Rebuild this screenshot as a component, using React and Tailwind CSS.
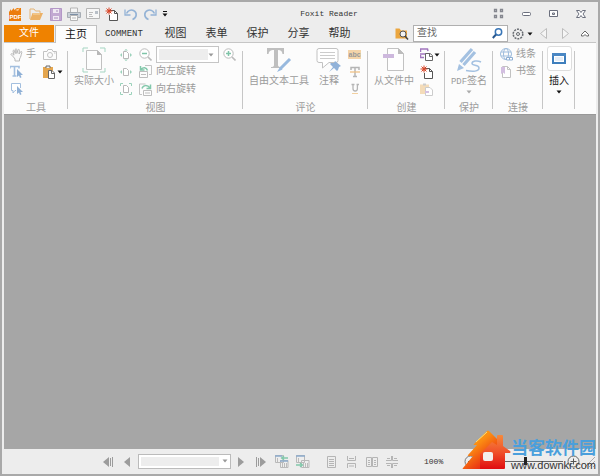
import React from "react";

function Svg({ w = 14, h = 14, className = "", children }) {
  return (
    <svg width={w} height={h} viewBox={`0 0 ${w} ${h}`} fill="none" aria-hidden="true" className={`block shrink-0 ${className}`}>
      {children}
    </svg>
  );
}

function Btn({ label, className = "", children }) {
  return (
    <button type="button" aria-label={label} className={`flex shrink-0 items-center ${className}`}>
      {children}
    </button>
  );
}

const Caret = ({ color = "#111" }) => (
  <Svg w={6} h={4}><path d="M0.5 0.5h5L3 3.5z" fill={color} /></Svg>
);

/* title bar */
const PdfLogo = () => (
  <Svg w={14}>
    <path d="M1 5l2-3v2l3-3v2l3-2h4v13H1z" fill="#ec7d0c" />
    <path d="M7 3l5-2-2 3z" fill="#f9c98f" />
    <text x="1.500" y="11.500" fontSize="6" fontWeight="bold" fill="#fff" fontFamily="Liberation Sans, sans-serif">PDF</text>
  </Svg>
);
const FolderIcon = () => (
  <Svg>
    <path d="M1 12V2h4l1.500 2H11v2" stroke="#e5b577" />
    <path d="M3.500 6H14l-3 7H1z" fill="#ecb165" />
    <path d="M4 7h7" stroke="#f6d7a8" />
  </Svg>
);
const SaveIcon = () => (
  <Svg w={12} h={13}>
    <path d="M.5.5h11v12H.5z" fill="#c2a9d2" stroke="#b397c7" />
    <path d="M3 1h6v4H3zM3 8h6v4H3z" fill="#efe9f3" />
    <path d="M4 10h4M7 2v2" stroke="#a98dbd" />
  </Svg>
);
const PrintIcon = () => (
  <Svg>
    <path d="M3.500 5V1h7v4" stroke="#b5b5b5" fill="#f5f5f5" />
    <path d="M.5 5.500h13v5H.5z" fill="#c9d0d8" stroke="#a7adb4" />
    <path d="M3 7.500h8" stroke="#7c8fa5" />
    <path d="M3.500 8.500h7v5h-7z" fill="#fafafa" stroke="#b5b5b5" />
    <path d="M5 11h4" stroke="#bbb" />
  </Svg>
);
const MailIcon = () => (
  <Svg h={12}>
    <path d="M.5.5h13v10H.5z" fill="#f7f7f7" stroke="#b5b5b5" />
    <path d="M3 4.500h4M3 6.500h3M3 8.500h4" stroke="#bcbcbc" />
    <path d="M9 3h3v3H9z" fill="#b9c0c8" />
  </Svg>
);
const NewIcon = () => (
  <Svg>
    <path d="M5 3.500h4.500l3 3v7H4.500V8" fill="#fff" stroke="#555" />
    <path d="M9.500 3.500v3h3" stroke="#555" />
    <path d="M4 .5v7M.5 4h7M1.500 1.500l5 5M6.500 1.500l-5 5" stroke="#d9482b" />
    <circle cx="4" cy="4" r="1.500" fill="#d9482b" />
  </Svg>
);
const UndoIcon = ({ flip = false }) => (
  <Svg h={13} className={flip ? "-scale-x-100" : ""}>
    <path d="M2.500 5.500C4 2.500 7 1.500 9.500 2.500c4 2 3.500 7.500-1 9" stroke="#94b3d6" strokeWidth="1.600" />
    <path d="M1 1.500v5.500h5.500" stroke="#94b3d6" strokeWidth="1.300" />
  </Svg>
);
const SearchBox = () => (
  <Svg w={14} h={13}>
    <path d="M.5 11.500V1.500h4l1.500 2h6v8z" fill="#eba63f" />
    <circle cx="8" cy="7" r="3" fill="#f1f1f1" stroke="#555" />
    <path d="M10 9l3 3.500" stroke="#444" strokeWidth="1.500" />
  </Svg>
);
const GearIcon = () => (
  <Svg w={12} h={12}>
    <circle cx="6" cy="6" r="4.800" stroke="#666a70" strokeWidth="1.500" strokeDasharray="2 1" />
    <circle cx="6" cy="6" r="1.500" stroke="#666a70" />
  </Svg>
);

/* ribbon */
const HandIcon = () => (
  <Svg>
    <path d="M3.500 9L1 6.500c0-1 1-1.300 2-.2L4 7.200 3 3c0-1 1.200-1.200 1.500 0l.8 2.500V1.500c0-1 1.400-1 1.500 0v4L8 2c.3-1 1.600-.7 1.400.4L9 6l1.500-2.200c.7-.8 1.700-.1 1.300.8C11 7 11 9 9.500 11v2H5v-2z" stroke="#b9b9b9" fill="#fafafa" />
  </Svg>
);
const CameraIcon = () => (
  <Svg h={11}>
    <path d="M.5 2.500h3.500l1-2h4l1 2h3.500v8H.5z" stroke="#c2c2c2" />
    <circle cx="7" cy="6" r="2.500" stroke="#c2c2c2" /><path d="M11 4h1.500" stroke="#c2c2c2" />
  </Svg>
);
const Pointer = ({ x, y }) => <path transform={`translate(${x} ${y})`} d="M0 0v8l2-1.500L3 9l1.500-.7L3.500 6H6z" fill="#8fb0d6" />;
const TextSelectIcon = () => (
  <Svg>
    <path d="M0 3.500V1.500h9V3.500M4.500 1.500v9M2.500 11h4" stroke="#a3bfdf" strokeWidth="1.600" />
    <Pointer x={7} y={4} />
  </Svg>
);
const BubbleSelectIcon = () => (
  <Svg>
    <path d="M6 8.500H5L3 11V8.500H1.500v-7h9V6" stroke="#a3bfdf" fill="#fff" />
    <Pointer x={7} y={4} />
  </Svg>
);
const PasteIcon = () => (
  <Svg w={12} h={14}>
    <path d="M0 2h10v11H0z" fill="#e4a64f" /><path d="M3 3V1h4v2" stroke="#6a6a6a" fill="#eee" />
    <path d="M5.500 5.500H9l2.500 2.500v5.500h-6z" fill="#fff" stroke="#666" /><path d="M8.500 5.500v3h3" stroke="#666" />
  </Svg>
);
const ActualSizeIcon = () => (
  <Svg w={24} h={26}>
    <path d="M1 5V1h5M18 1h5v4M1 21v4h5M18 25h5v-4" stroke="#a5d5c2" />
    <path d="M4.500 3.500h11l4 4v15h-15z" fill="#fdfdfd" stroke="#c1c1c1" />
    <path d="M15 3v5h5z" fill="#b9b9b9" />
  </Svg>
);
function FitIcon({ kind }) {
  return (
    <Svg w={12} h={12}>
      <path d="M3.500 2.500h3l2 2v5h-5z" stroke="#b8b8b8" fill="#fff" />
      {kind !== "corners" && <path d="M2 4L0 6l2 2zM10 4l2 2-2 2z" fill="#9bd2bb" />}
      {kind === "all" && <path d="M4 1.500L6 0l2 1.500zM4 10.500L6 12l2-1.500z" fill="#9bd2bb" />}
      {kind === "corners" && <path d="M.5 3V.5H3M9 .5h2.500V3M.5 9v2.500H3M9 11.500h2.500V9" stroke="#9bd2bb" />}
    </Svg>
  );
}
const ZoomIcon = ({ plus = false }) => (
  <Svg w={13} h={13}>
    <circle cx="5.500" cy="5.500" r="4.700" stroke="#bbb" fill="#fff" />
    <path d="M9 9l3.500 3.500" stroke="#bbb" strokeWidth="1.600" />
    <path d={plus ? "M3 5.500h5M5.500 3v5" : "M3 5.500h5"} stroke="#7fc4a8" strokeWidth="1.500" />
  </Svg>
);
const RotateLeftIcon = () => (
  <Svg w={13} h={13}>
    <path d="M6 .5h6.500v9H10" stroke="#c4c4c4" />
    <path d="M.5 6.500h8v6h-8zM2 9.500h5" stroke="#bdbdbd" />
    <path d="M1.500 1v4h4M2 4.500C4 2 7.500 2 8.500 5.500" stroke="#83c8ab" strokeWidth="1.500" />
  </Svg>
);
const RotateRightIcon = () => (
  <Svg w={13} h={13}>
    <path d="M3 11.500H.5V1h6" stroke="#c4c4c4" />
    <path d="M4.500 7.500h8v5h-8zM6 10h5" stroke="#bdbdbd" />
    <path d="M11.500 1.500v4h-4M3 5.500C4 2 8.500 1.500 11 5" stroke="#83c8ab" strokeWidth="1.500" />
  </Svg>
);
const TypewriterIcon = () => (
  <Svg w={26} h={26}>
    <path d="M1 1h17v6h-1.500C16 4 15 3 12 3v15c0 1.500 1 2 3 2v1H5v-1c2 0 3-.5 3-2V3C4.500 3 3 4 2.500 7H1z" fill="#bfbfbf" />
    <path d="M24 12l-9.500 9.500" stroke="#98b9de" strokeWidth="3" />
    <path d="M14 20l2.500 2.500L11 25z" fill="#98b9de" />
  </Svg>
);
const NoteIcon = () => (
  <Svg w={26} h={26}>
    <path d="M3 1.500h17q2 0 2 2v10q0 2-2 2h-7L6.500 21v-5.500H3q-2 0-2-2v-10q0-2 2-2z" stroke="#c2c2c2" fill="#fff" />
    <path d="M4 5.500h15M4 8.500h15M4 11.500h15" stroke="#ccc" />
    <path d="M19 14l6 5-2 1-1 3-1 1-3-3-5 4 4-5-3-3 1-1 3 0z" fill="#91b2d9" />
  </Svg>
);
const AbcIcon = () => (
  <Svg h={9}>
    <path d="M0 0h13v9H0z" fill="#f4d4a9" />
    <text x="0.500" y="7" fontSize="7" fontWeight="bold" fill="#999" fontFamily="Liberation Sans, sans-serif">abc</text>
  </Svg>
);
const StrikeIcon = () => (
  <Svg h={12}>
    <path d="M3 4V1.500h8V4M7 1.500v9M5 10.500h4" stroke="#b5b5b5" strokeWidth="1.500" />
    <path d="M2 6h10" stroke="#f0c285" strokeWidth="1.300" />
  </Svg>
);
const UnderlineIcon = () => (
  <Svg h={12}>
    <path d="M3.500 1.500h3M8.500 1.500h2.500M5 1.500v4q0 2.500 2.200 2.500t2.200-2.500v-4" stroke="#b5b5b5" strokeWidth="1.300" />
    <path d="M4 10.500h6" stroke="#f2d0a0" />
  </Svg>
);
const FromFileIcon = () => (
  <Svg w={22} h={26}>
    <path d="M4.500 1.500h11l5 5v17h-16z" fill="#fefefe" stroke="#c2c2c2" /><path d="M15 1v6h6z" fill="#bdbdbd" />
    <path d="M0 7h11v4H0z" fill="#cdb8dd" />
  </Svg>
);
const ScanIcon = () => (
  <Svg w={13} h={13}>
    <path d="M.5 4V1h7l.5 2M0 6h7M.5 7v2.500H4" stroke="#a176bd" strokeWidth="1.500" />
    <path d="M5.500 5.500H10l2.500 2v5h-7z" fill="#fff" stroke="#666" /><path d="M9.500 5.500v3h3" stroke="#666" />
  </Svg>
);
const ClipIcon = () => (
  <Svg w={13} h={13}>
    <path d="M0 1.500h9V11H0z" fill="#f4dcb9" /><path d="M3 .5h3v2H3z" fill="#ccc" />
    <path d="M5.500 4.500H10l2.500 2.500v5.500h-7z" fill="#fff" stroke="#ccc" /><path d="M5 8h4v2H5z" fill="#d5c1e2" />
  </Svg>
);
const SignIcon = () => (
  <Svg w={25} h={26}>
    <path d="M15 2L3.500 15M18 5L6.500 18" stroke="#a4c1e1" strokeWidth="3.200" />
    <path d="M2 17l5 4-7 3z" fill="#a4c1e1" />
    <path d="M24 15c-4-2-9-1-9 1.500s7 1 7 4.500-6 4-13 2.500" stroke="#a4c1e1" strokeWidth="1.500" />
  </Svg>
);
const GlobeIcon = () => (
  <Svg w={13} h={13}>
    <circle cx="6" cy="6" r="5.500" stroke="#9fbddd" /><ellipse cx="6" cy="6" rx="2.500" ry="5.500" stroke="#9fbddd" />
    <path d="M1 4h10M1 8h10" stroke="#9fbddd" />
    <path d="M6.500 9.500h3v2.500h-3zM9.500 9.500h3v2.500h-3z" stroke="#8eafd3" fill="#fff" />
  </Svg>
);
const BookmarkIcon = () => (
  <Svg w={13} h={12}>
    <path d="M2.500.5h5l3 3v8h-8z" stroke="#c2c2c2" fill="#fff" /><path d="M7.500.5v3h3" stroke="#c2c2c2" />
    <path d="M1 1h4v7L3 6.500 1 8z" fill="#d3bfe1" />
  </Svg>
);
const InsertIcon = () => (
  <Svg w={14} h={11}>
    <path d="M1 1h12v9H1z" fill="#fff" stroke="#3f7fbd" strokeWidth="2" />
    <path d="M0 0h14v3H0z" fill="#4b88c4" /><path d="M3 4h8v4H3z" fill="#e6eef7" />
  </Svg>
);

/* status bar */
const Nav = ({ double = false, right = false }) => (
  <Svg w={double ? 10 : 6} h={10} className={right ? "-scale-x-100" : ""}>
    <path d="M6 0v10L0 5z" fill="#9c9c9c" />
    {double && <path d="M7.500 1v8M9.500 0v10" stroke="#9c9c9c" />}
  </Svg>
);
const ViewIcon = ({ fwd = false }) => (
  <Svg w={14} h={13}>
    <path d="M.5.5h8v7h-8zM5.500 5.500h7.500v7H5.500z" stroke="#b9b9b9" fill="#eee" />
    <path d={fwd ? "M0 1h9" : "M0 1h7M5 6h8"} stroke="#8cabcc" strokeWidth="1.500" />
    <path d="M7.500 8v4M9.500 8v4M11.500 8v4M2.500 3v4" stroke="#bbb" />
    <path d={fwd ? "M0 10h6M4 8l2.500 2L4 12" : "M13 3H7M9 1L6.500 3 9 5"} stroke="#83c8ab" strokeWidth="1.300" />
  </Svg>
);
function PageIcon({ kind }) {
  const d = {
    single: "M1.500.5h8v11h-8zM3 3.500h5M3 5.500h5M3 7.500h5M3 9.500h5",
    cont: "M1.500 0v4.500h8V0M1.500 12V7.500h8V12M3 2.500h5M3 10h5",
    facing: "M.5 1.500h5v9h-5zM6.500 1.500h5v9h-5zM2 4.500h2M2 6.500h2M2 8.500h2M8 4.500h2M8 6.500h2M8 8.500h2",
    contFacing: "M0 4.500h5.500V0M12 4.500H6.500V0M0 7.500h5.500V12M12 7.500H6.500V12M1 2.500h3M8 2.500h3M1 9.500h3M8 9.500h3",
  }[kind];
  return <Svg w={12} h={12}><path d={d} stroke="#b5b5b5" /></Svg>;
}

function Group({ label, className = "", children }) {
  return (
    <section aria-label={label || "插入"} className={`relative flex shrink-0 flex-col pt-[3px] after:absolute after:top-2 after:right-0 after:h-[58px] after:w-px after:bg-[#c6c6c6] ${className}`}>
      <div className="flex h-[52px]">{children}</div>
      <div className="mt-1.5 text-center leading-[10px]">{label}</div>
    </section>
  );
}

function Big({ label, icon, className = "" }) {
  return (
    <button type="button" className={`flex shrink-0 flex-col items-center self-start whitespace-nowrap ${className}`}>
      <span className="flex h-7 items-center">{icon}</span>
      <span className="leading-4">{label}</span>
    </button>
  );
}

const Rows = ({ className = "", children }) => (
  <div className={`grid shrink-0 grid-rows-3 items-center ${className}`}>{children}</div>
);

const tabs = ["视图", "表单", "保护", "分享", "帮助"];

export default function App() {
  return (
    <div className="relative flex h-screen flex-col overflow-hidden border-2 border-[#a9a9a9] bg-[#ededed] px-0.5 pt-px font-['Liberation_Mono','Noto_Sans_CJK_SC',monospace] text-[10px] text-[#9b9b9b]">
      <header className="flex h-[22px] shrink-0 items-center text-[8px] text-[#333]">
        <div className="flex flex-1 items-center gap-[5px] pl-1">
          <Btn label="Foxit"><PdfLogo /></Btn>
          <Btn label="打开" className="ml-0.5"><FolderIcon /></Btn>
          <Btn label="保存" className="ml-0.5"><SaveIcon /></Btn>
          <Btn label="打印"><PrintIcon /></Btn>
          <Btn label="邮件"><MailIcon /></Btn>
          <Btn label="新建"><NewIcon /></Btn>
          <Btn label="撤销"><UndoIcon /></Btn>
          <Btn label="重做"><UndoIcon flip /></Btn>
          <Btn label="更多"><Svg w={6} h={6}><path d="M1 .5h4" stroke="#111" /><path d="M.5 2.500h5L3 5.500z" fill="#111" /></Svg></Btn>
        </div>
        <h1 className="pl-16">Foxit Reader</h1>
        <div className="flex flex-1 items-center justify-end gap-[17px] pr-2.5">
          <Btn label="皮肤"><Svg w={12} h={12}><path d="M1.500 1.500h2v2h-2zM7.500 1.500h2v2h-2zM1.500 7.500h2v2h-2zM7.500 7.500h2v2h-2z" stroke="#85878f" strokeWidth="1.300" /></Svg></Btn>
          <Btn label="最小化"><Svg w={10} h={10}><rect x=".5" y="3.500" width="8" height="3" rx="1" stroke="#6b6f7d" fill="#fff" /></Svg></Btn>
          <Btn label="最大化"><Svg w={10} h={10}><path d="M.5 1.500h8v6h-8z" stroke="#6b6f7d" fill="#fff" /><path d="M3.500 4h2v1.500h-2z" stroke="#6b6f7d" /></Svg></Btn>
          <Btn label="关闭"><Svg w={10} h={10}><path d="M.5 1.500h3l1.500 2 1.500-2h3L7 5l2.500 3.500h-3L5 6.500l-1.500 2h-3L3 5z" stroke="#6b6f7d" fill="#fff" /></Svg></Btn>
        </div>
      </header>

      <nav className="flex h-[18px] shrink-0 items-stretch border-b border-[#c6c6c6] text-[11px] leading-[18px] text-[#333]">
        <button type="button" className="w-[50px] shrink-0 bg-[#ef8200] text-[10px] text-white">文件</button>
        <button type="button" className="-mb-px ml-px w-[42px] shrink-0 border border-b-0 border-[#c0c0c0] bg-[#fcfcfc] text-[#111]">主页</button>
        <button type="button" className="w-[54px] shrink-0 text-[9px]">COMMENT</button>
        <div className="ml-1 flex shrink-0">
          {tabs.map((t) => <button key={t} type="button" className="w-[41px]">{t}</button>)}
        </div>
        <div className="flex flex-1 items-center justify-end pr-[7px]">
          <Btn label="搜索文件夹"><SearchBox /></Btn>
          <label className="ml-1 flex h-[17px] w-[95px] items-center border border-[#b0b0b0] bg-white pr-1 pl-[3px]">
            <input aria-label="查找" placeholder="查找" className="h-full w-0 min-w-0 flex-1 bg-transparent text-[10px] outline-none placeholder:text-[#666]" />
            <Svg w={11} h={11}><circle cx="6.500" cy="4" r="3.200" stroke="#3976b7" strokeWidth="1.500" /><path d="M4 6.500L.8 10" stroke="#28578e" strokeWidth="2" /></Svg>
          </label>
          <Btn label="设置" className="ml-1 gap-[3px]"><GearIcon /><Caret /></Btn>
          <Btn label="后退" className="ml-[7px]"><Svg w={7} h={11}><path d="M6.500.5v10L.5 5.500z" stroke="#bdbdbd" fill="#f5f5f5" /></Svg></Btn>
          <Btn label="前进" className="ml-[15px]"><Svg w={7} h={11}><path d="M.5.5v10l6-5z" stroke="#bdbdbd" fill="#f5f5f5" /></Svg></Btn>
          <Btn label="折叠" className="ml-3"><Svg w={8} h={7}><path d="M.5 4.500L4 1l3.500 3.500v1.500h-2L4 4.500 2.500 6h-2z" stroke="#666" fill="#fff" /></Svg></Btn>
        </div>
      </nav>

      <div className="flex h-[71px] shrink-0 bg-[#fcfcfc]">
        <Group label="工具" className="w-16">
          <Rows className="ml-1.5 w-8">
            <button type="button" className="flex items-center gap-0.5"><HandIcon />手</button>
            <Btn label="选择文本"><TextSelectIcon /></Btn>
            <Btn label="选择注释"><BubbleSelectIcon /></Btn>
          </Rows>
          <Rows className="ml-px">
            <Btn label="截图"><CameraIcon /></Btn>
            <Btn label="粘贴" className="gap-0.5"><PasteIcon /><Caret /></Btn>
          </Rows>
        </Group>
        <Group label="视图" className="w-[175px]">
          <Big label="实际大小" icon={<ActualSizeIcon />} className="ml-1.5 w-10" />
          <Rows className="ml-1.5">
            <Btn label="适合页面"><FitIcon kind="all" /></Btn>
            <Btn label="适合宽度"><FitIcon /></Btn>
            <Btn label="适合视区"><FitIcon kind="corners" /></Btn>
          </Rows>
          <Rows className="ml-[7px]">
            <div className="flex items-center gap-1">
              <Btn label="缩小"><ZoomIcon /></Btn>
              <div className="relative h-[17px] w-[63px] border border-[#c5c5c5] bg-white p-0.5">
                <select aria-label="缩放" className="block h-full w-[49px] appearance-none bg-[#ededed]"><option></option></select>
                <span className="pointer-events-none absolute top-1.5 right-1"><Caret color="#999" /></span>
              </div>
              <Btn label="放大"><ZoomIcon plus /></Btn>
            </div>
            <button type="button" className="flex items-center gap-1"><RotateLeftIcon />向左旋转</button>
            <button type="button" className="flex items-center gap-1"><RotateRightIcon />向右旋转</button>
          </Rows>
        </Group>
        <Group label="评论" className="w-[125px]">
          <Big label="自由文本工具" icon={<TypewriterIcon />} className="ml-1.5 w-[60px]" />
          <Big label="注释" icon={<NoteIcon />} className="ml-[7px] w-[26px]" />
          <Rows className="ml-1.5">
            <Btn label="高亮"><AbcIcon /></Btn>
            <Btn label="删除线"><StrikeIcon /></Btn>
            <Btn label="下划线"><UnderlineIcon /></Btn>
          </Rows>
        </Group>
        <Group label="创建" className="w-[77px]">
          <Big label="从文件中" icon={<FromFileIcon />} className="ml-1.5 w-10" />
          <Rows className="ml-1.5">
            <Btn label="扫描" className="gap-px"><ScanIcon /><Caret /></Btn>
            <Btn label="空白"><NewIcon /></Btn>
            <Btn label="剪贴板"><ClipIcon /></Btn>
          </Rows>
        </Group>
        <Group label="保护" className="w-12">
          <button type="button" className="flex w-full flex-col items-center self-start whitespace-nowrap">
            <span className="flex h-7 items-center"><SignIcon /></span>
            <span className="leading-4"><span className="text-[9px]">PDF</span>签名</span>
            <Caret color="#aaa" />
          </button>
        </Group>
        <Group label="连接" className="w-[50px]">
          <Rows className="ml-[7px]">
            <button type="button" className="flex items-center gap-[3px]"><GlobeIcon />线条</button>
            <button type="button" className="flex items-center gap-[3px]"><BookmarkIcon />书签</button>
          </Rows>
        </Group>
        <Group className="w-8 text-[#111]">
          <button type="button" className="flex w-full flex-col items-center self-start">
            <span className="flex size-[25px] items-center justify-center rounded-[3px] border border-[#ddd] bg-white"><InsertIcon /></span>
            <span className="mt-[3px] leading-4">插入</span>
            <Caret />
          </button>
        </Group>
      </div>

      <main className="min-h-0 flex-1 border-t border-[#989898] bg-[#a6a6a6]" />

      <footer className="flex h-[25px] shrink-0 items-center pl-[99px]">
        <Btn label="首页"><Nav double /></Btn>
        <Btn label="上一页" className="ml-[11px]"><Nav /></Btn>
        <div className="relative ml-2 h-[15px] w-[93px] shrink-0 border border-[#bbb] bg-white p-0.5">
          <select aria-label="页码" className="block h-full w-[78px] appearance-none bg-[#ededed]"><option></option></select>
          <span className="pointer-events-none absolute top-1 right-0.5"><Caret color="#999" /></span>
        </div>
        <Btn label="下一页" className="ml-[7px]"><Nav right /></Btn>
        <Btn label="末页" className="ml-3"><Nav double right /></Btn>
        <div className="ml-[9px] flex gap-[7px]">
          <Btn label="上一视图"><ViewIcon /></Btn>
          <Btn label="下一视图"><ViewIcon fwd /></Btn>
        </div>
        <div className="ml-4 flex gap-2">
          <Btn label="单页"><PageIcon kind="single" /></Btn>
          <Btn label="连续"><PageIcon kind="cont" /></Btn>
          <Btn label="对开"><PageIcon kind="facing" /></Btn>
          <Btn label="连续对开"><PageIcon kind="contFacing" /></Btn>
        </div>
        <span className="ml-[26px] text-[8px] text-[#333]">100%</span>
        <div className="flex flex-1 items-center justify-end gap-1">
          <Btn label="缩小"><Svg w={13} h={13}><circle cx="6.500" cy="6.500" r="5.500" stroke="#777" /><path d="M4 6.500h5" stroke="#555" /></Svg></Btn>
          <input type="range" aria-label="缩放比例" defaultValue="55" className="h-3 w-[82px] appearance-none bg-transparent [&::-webkit-slider-runnable-track]:h-px [&::-webkit-slider-runnable-track]:bg-[#666] [&::-webkit-slider-thumb]:-mt-1 [&::-webkit-slider-thumb]:h-2 [&::-webkit-slider-thumb]:w-[3px] [&::-webkit-slider-thumb]:appearance-none [&::-webkit-slider-thumb]:bg-[#222]" />
          <Btn label="放大"><Svg w={13} h={13}><circle cx="6.500" cy="6.500" r="5.500" stroke="#666" /><path d="M3.500 6.500h6M6.500 3.500v6" stroke="#555" /></Svg></Btn>
          <Svg w={12} h={14}><path d="M1 12L11 2M5 12l6-6M9 12l2-2" stroke="#aaa" /></Svg>
        </div>
      </footer>

      <div className="pointer-events-none absolute -right-0.5 bottom-0.5 flex items-end whitespace-nowrap">
        <Svg w={49} h={42}>
          <defs>
            <linearGradient id="roof" x1="0" y1="0" x2="0.700" y2="1">
              <stop offset="0" stopColor="#ffc51a" /><stop offset="0.450" stopColor="#fb8a12" /><stop offset="1" stopColor="#e51b12" />
            </linearGradient>
            <linearGradient id="house" x1="0" y1="0" x2="0" y2="1">
              <stop offset="0" stopColor="#f58a3c" /><stop offset="0.500" stopColor="#f0512b" /><stop offset="1" stopColor="#e00c10" />
            </linearGradient>
          </defs>
          <path d="M25 1q1-1 2 0l8 8v30H1q-1 0 0-1l10-12H7q-2 0-1-1l9-10h-3q-1 0 0-1z" fill="url(#roof)" />
          <path d="M35 6q0-1 1-1h4q1 0 1 1v10l7 5q1 1 0 2h-5v15q0 1-1 1H18V24l12-12 5 3z" fill="url(#house)" />
          <path d="M23 22h6q2 0 2 2v5q0 2-2 2h-6q-2 0-2-2v-5q0-2 2-2z" fill="#f3eeee" />
          <path d="M25 2L14 12" stroke="#ffdf73" />
        </Svg>
        <div className="w-[89px] font-['Liberation_Sans','Noto_Sans_CJK_SC',sans-serif]">
          <div className="text-[17px] leading-[20px] font-bold text-[#4a9fdc]">当客软件园</div>
          <div className="text-[11px] leading-[13px] text-[#333]">www.downkr.com</div>
        </div>
      </div>
    </div>
  );
}
